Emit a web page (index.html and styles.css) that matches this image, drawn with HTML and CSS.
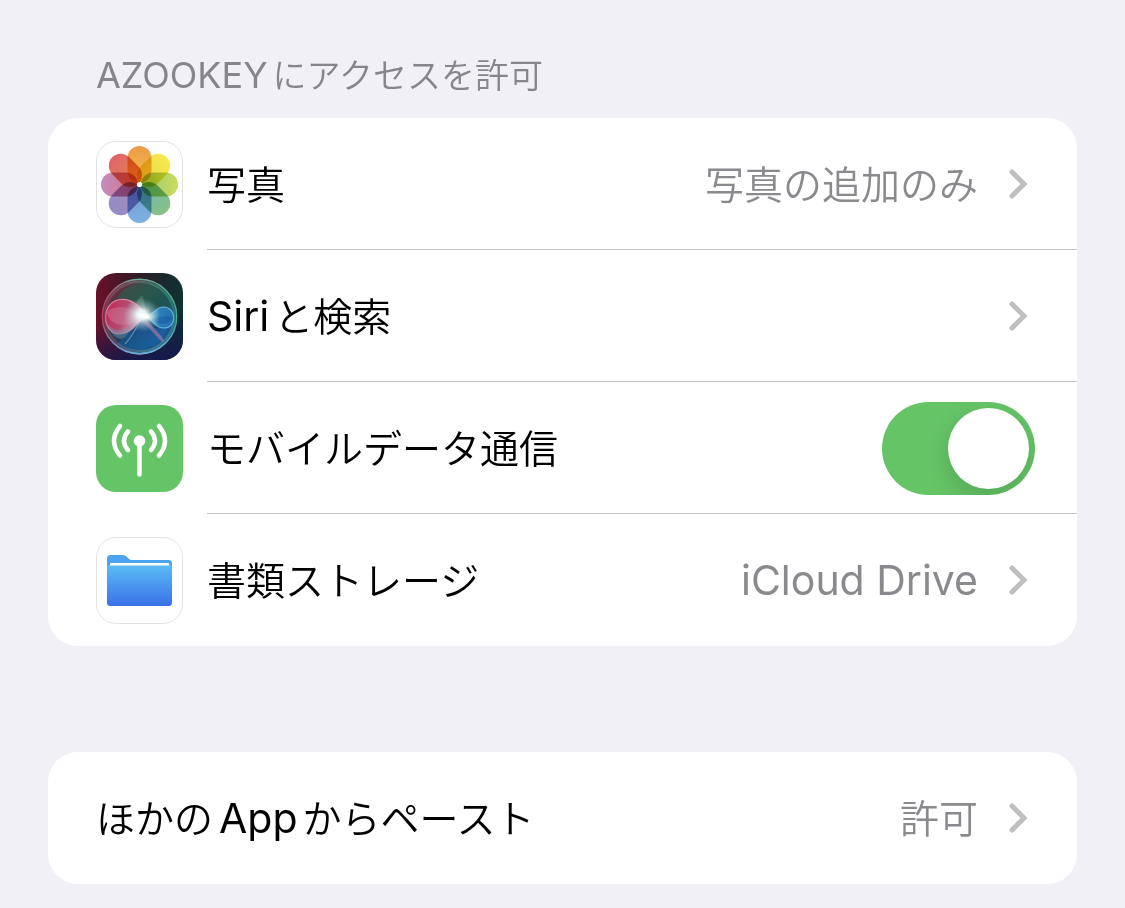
FILE: index.html
```html
<!DOCTYPE html>
<html lang="ja">
<head>
<meta charset="utf-8">
<meta name="viewport" content="width=device-width, initial-scale=1">
<title>azooKey</title>
<link rel="stylesheet" href="styles.css">
</head>
<body>
<main class="settings">
  <section class="group">
    <h2 class="group-title"><span class="latin space-after">AZOOKEY</span>にアクセスを許可</h2>
    <ul class="card">
      <li>
        <button class="row" type="button">
          <svg class="app-icon" viewBox="0 0 87 87" aria-hidden="true">
            <defs>
              <linearGradient id="p0" x1="0" y1="0" x2="0" y2="1"><stop offset="0" stop-color="#ec9a45"/><stop offset="1" stop-color="#f3c552"/></linearGradient>
              <linearGradient id="p1" x1="0" y1="0" x2="0" y2="1"><stop offset="0" stop-color="#f8e94f"/><stop offset="1" stop-color="#e6d84c"/></linearGradient>
              <linearGradient id="p2" x1="0" y1="0" x2="0" y2="1"><stop offset="0" stop-color="#c9dc5c"/><stop offset="1" stop-color="#9cc676"/></linearGradient>
              <linearGradient id="p3" x1="0" y1="0" x2="0" y2="1"><stop offset="0" stop-color="#88c184"/><stop offset="1" stop-color="#74b7b4"/></linearGradient>
              <linearGradient id="p4" x1="0" y1="0" x2="0" y2="1"><stop offset="0" stop-color="#7cb2e0"/><stop offset="1" stop-color="#7398d0"/></linearGradient>
              <linearGradient id="p5" x1="0" y1="0" x2="0" y2="1"><stop offset="0" stop-color="#948cc6"/><stop offset="1" stop-color="#a78abc"/></linearGradient>
              <linearGradient id="p6" x1="0" y1="0" x2="0" y2="1"><stop offset="0" stop-color="#c48cc0"/><stop offset="1" stop-color="#d8707c"/></linearGradient>
              <linearGradient id="p7" x1="0" y1="0" x2="0" y2="1"><stop offset="0" stop-color="#de6468"/><stop offset="1" stop-color="#e68850"/></linearGradient>
            </defs>
            <rect x=".5" y=".5" width="86" height="86" rx="19.5" fill="#fff" stroke="#e3e3e5"/>
            <g class="petals">
              <rect x="31.5" y="5" width="24" height="37" rx="12" fill="url(#p0)"/>
              <rect x="31.5" y="5" width="24" height="37" rx="12" fill="url(#p1)" transform="rotate(45 43.5 43.5)"/>
              <rect x="31.5" y="5" width="24" height="37" rx="12" fill="url(#p2)" transform="rotate(90 43.5 43.5)"/>
              <rect x="31.5" y="5" width="24" height="37" rx="12" fill="url(#p3)" transform="rotate(135 43.5 43.5)"/>
              <rect x="31.5" y="5" width="24" height="37" rx="12" fill="url(#p4)" transform="rotate(180 43.5 43.5)"/>
              <rect x="31.5" y="5" width="24" height="37" rx="12" fill="url(#p5)" transform="rotate(225 43.5 43.5)"/>
              <rect x="31.5" y="5" width="24" height="37" rx="12" fill="url(#p6)" transform="rotate(270 43.5 43.5)"/>
              <rect x="31.5" y="5" width="24" height="37" rx="12" fill="url(#p7)" transform="rotate(315 43.5 43.5)"/>
            </g>
            <circle cx="43.5" cy="43.5" r="2.6" fill="#fff"/>
          </svg>
          <span class="row-body">
            <span class="label">写真</span>
            <span class="value">写真の追加のみ</span>
            <svg class="chevron" viewBox="0 0 20 32" aria-hidden="true"><path d="M4 4 16 16 4 28"/></svg>
          </span>
        </button>
      </li>
      <li>
        <button class="row" type="button">
          <svg class="app-icon" viewBox="0 0 87 87" aria-hidden="true">
            <defs>
              <linearGradient id="sBg" x1="0" y1="0" x2="1" y2="0"><stop offset="0" stop-color="#6b1029"/><stop offset=".5" stop-color="#2c1e28"/><stop offset="1" stop-color="#0f3233"/></linearGradient>
              <linearGradient id="sLow" x1=".3" y1="0" x2=".5" y2="1"><stop offset=".5" stop-color="#141850" stop-opacity="0"/><stop offset="1" stop-color="#141850" stop-opacity=".85"/></linearGradient>
              <linearGradient id="sOrb" x1=".1" y1=".2" x2=".8" y2=".9"><stop offset="0" stop-color="#6b2c42"/><stop offset=".35" stop-color="#35424c"/><stop offset=".6" stop-color="#1d3c5c"/><stop offset="1" stop-color="#1c5c9a"/></linearGradient>
              <linearGradient id="sRim" x1="0" y1=".5" x2="1" y2=".4"><stop offset="0" stop-color="#b04462"/><stop offset=".45" stop-color="#79a596"/><stop offset="1" stop-color="#46ae8c"/></linearGradient>
              <linearGradient id="sRimLow" x1="0" y1="0" x2="0" y2="1"><stop offset=".55" stop-color="#5aa0d8" stop-opacity="0"/><stop offset="1" stop-color="#6aaee0"/></linearGradient>
              <linearGradient id="sRed" x1="0" y1="0" x2="1" y2=".3"><stop offset="0" stop-color="#d02458"/><stop offset=".55" stop-color="#c04c74"/><stop offset="1" stop-color="#f0c8d6"/></linearGradient>
              <linearGradient id="sBlue" x1="0" y1="0" x2="1" y2="0"><stop offset="0" stop-color="#c8ecf6"/><stop offset=".5" stop-color="#2f83c4"/><stop offset="1" stop-color="#2675b8"/></linearGradient>
              <radialGradient id="sGlow"><stop offset="0" stop-color="#fff"/><stop offset=".25" stop-color="#fff" stop-opacity=".95"/><stop offset=".5" stop-color="#dceef0" stop-opacity=".5"/><stop offset="1" stop-color="#8cc4cc" stop-opacity="0"/></radialGradient>
              <clipPath id="sClip"><rect width="87" height="87" rx="20"/></clipPath>
              <clipPath id="sCircle"><circle cx="43.5" cy="43.5" r="37"/></clipPath>
            </defs>
            <g clip-path="url(#sClip)">
              <rect width="87" height="87" fill="url(#sBg)"/>
              <rect width="87" height="87" fill="url(#sLow)"/>
              <circle cx="43.5" cy="43.5" r="37.5" fill="url(#sOrb)"/>
              <g clip-path="url(#sCircle)">
                <ellipse cx="49" cy="30" rx="28" ry="20" fill="#1f6a4c" opacity=".5"/>
                <path d="M46 43C38 36 38 29 46 22C49 29 50 36 49 43Z" fill="#8aa494" opacity=".35"/>
                <path d="M45 44C34 58 25 68 21 71C34 83 69 78 73 48C64 60 55 56 45 44Z" fill="#1a70bc" opacity=".4"/>
                <path d="M45 46C40 56 36 64 29 71" fill="none" stroke="#7fb4dc" stroke-width="1.2" opacity=".6"/>
                <path d="M50 46 66 64Q70 70 65 68L48 50Z" fill="#b77caa" opacity=".6"/>
                <path d="M49 41C41 29 33 26 25 26.5C4 28 5 61 24 61C38 60 40 48 49 44Z" fill="url(#sRed)" stroke="#f08aa6" stroke-width="1.2" opacity=".92"/>
                <path d="M46 42C33 31 12 33 11 40C14 54 33 55 45 45Z" fill="#d898ae" opacity=".35"/>
                <path d="M44 45C36 51 32 65 25 66C17 65 13 56 12 51C22 64 35 53 44 45Z" fill="#6a9ab8" opacity=".45"/>
                <path d="M49 43C58 42 59 34 68 34C81 35 81 55 68 55C58 55 57 46 49 44Z" fill="url(#sBlue)" stroke="#6cc4e4" stroke-width="1.2" opacity=".88"/>
                <path d="M54 44C60 47 68 41 77 44C73 53 61 53 54 44Z" fill="#154e9c" opacity=".4"/>
                <ellipse cx="46" cy="42" rx="19" ry="17" fill="url(#sGlow)"/>
                <ellipse cx="48" cy="43" rx="15" ry="6" fill="url(#sGlow)" transform="rotate(14 48 43)"/>
              </g>
              <circle cx="43.5" cy="43.5" r="37.2" fill="none" stroke="url(#sRim)" stroke-width="1.4"/>
              <circle cx="43.5" cy="43.5" r="34.8" fill="none" stroke="url(#sRim)" stroke-width="2.4" opacity=".4"/>
              <circle cx="43.5" cy="43.5" r="37.2" fill="none" stroke="url(#sRimLow)" stroke-width="1.4"/>
            </g>
          </svg>
          <span class="row-body">
            <span class="label"><span class="latin space-after">Siri</span>と検索</span>
            <svg class="chevron" viewBox="0 0 20 32" aria-hidden="true"><path d="M4 4 16 16 4 28"/></svg>
          </span>
        </button>
      </li>
      <li class="row">
        <svg class="app-icon" viewBox="0 0 87 87" aria-hidden="true">
          <rect width="87" height="87" rx="20" fill="#65c466"/>
          <circle cx="43.5" cy="36" r="5.8" fill="#fff"/>
          <path d="M43.5 38V69.5M32 26.5Q24 36 32 45M24 21Q12 36 24 50.5M55 26.5Q63 36 55 45M63 21Q75 36 63 50.5" fill="none" stroke="#fff" stroke-width="4.5" stroke-linecap="round"/>
        </svg>
        <span class="row-body">
          <label class="label" for="mobile-data">モバイルデータ通信</label>
          <input class="switch" id="mobile-data" type="checkbox" role="switch" checked>
        </span>
      </li>
      <li>
        <button class="row" type="button">
          <svg class="app-icon" viewBox="0 0 87 87" aria-hidden="true">
            <defs>
              <linearGradient id="fFront" x1="0" y1="0" x2="0" y2="1"><stop offset="0" stop-color="#5bbcf5"/><stop offset="1" stop-color="#3971e8"/></linearGradient>
            </defs>
            <rect x=".5" y=".5" width="86" height="86" rx="19.5" fill="#fff" stroke="#e3e3e5"/>
            <path d="M11 34V21.5Q11 18 14.5 18H27Q29 18 30.5 19.5L33 22Q34 23 36 23H72.5Q76 23 76 26.5V34Z" fill="#4ba5ee"/>
            <rect x="14" y="26" width="59" height="5" rx="1" fill="#fff"/>
            <path d="M11 28.5H76V65.5Q76 69 72.5 69H14.5Q11 69 11 65.5Z" fill="url(#fFront)"/>
          </svg>
          <span class="row-body">
            <span class="label">書類ストレージ</span>
            <span class="value"><span class="latin">iCloud Drive</span></span>
            <svg class="chevron" viewBox="0 0 20 32" aria-hidden="true"><path d="M4 4 16 16 4 28"/></svg>
          </span>
        </button>
      </li>
    </ul>
  </section>
  <section class="group">
    <ul class="card">
      <li>
        <button class="row" type="button">
          <span class="row-body">
            <span class="label">ほかの<span class="latin space-before space-after">App</span>からペースト</span>
            <span class="value">許可</span>
            <svg class="chevron" viewBox="0 0 20 32" aria-hidden="true"><path d="M4 4 16 16 4 28"/></svg>
          </span>
        </button>
      </li>
    </ul>
  </section>
</main>
</body>
</html>
```
FILE: styles.css
```css
* {
  box-sizing: border-box;
}

body {
  margin: 0;
  background: #f1f0f6;
  color: #000;
  font-family: "Noto Sans CJK JP", sans-serif;
  font-size: 39px;
  font-weight: 350;
  line-height: 48px;
}

.settings {
  display: flex;
  flex-direction: column;
  gap: 106px;
  padding: 50px 48px 24px;
}

.group-title {
  margin: 0 0 20px;
  padding: 0 48px;
  color: #868589;
  font-size: 34px;
  font-weight: 350;
}

.latin {
  font-family: Inter, sans-serif;
  font-size: 41px;
  font-weight: 400;
  line-height: 1;
}

.group-title .latin {
  font-size: 36px;
}

.space-before {
  margin-left: 6px;
}

.space-after {
  margin-right: 5px;
}

.card {
  margin: 0;
  padding: 0;
  list-style: none;
  overflow: hidden;
  border-radius: 30px;
  background: #fff;
}

.row {
  display: flex;
  align-items: center;
  gap: 24px;
  width: 100%;
  margin: 0;
  padding: 0 0 0 48px;
  border: 0;
  background: none;
  color: inherit;
  font: inherit;
  text-align: left;
}

.app-icon {
  flex: none;
  width: 87px;
  height: 87px;
}

.petals {
  isolation: isolate;
}

.petals rect {
  mix-blend-mode: multiply;
}

.row-body {
  display: flex;
  flex: 1;
  align-items: center;
  min-height: 132px;
  padding-right: 49px;
  box-shadow: inset 0 -1px #c6c6c8;
}

.card > li:last-child .row-body {
  box-shadow: none;
}

.label {
  flex: 1;
  padding-bottom: 4px;
}

.value {
  padding-bottom: 4px;
  color: #8a898e;
}

.chevron {
  flex: none;
  width: 20px;
  height: 32px;
  margin-left: 30px;
  fill: none;
  stroke: #bfbfc0;
  stroke-width: 5;
  stroke-linecap: round;
  stroke-linejoin: miter;
}

.switch {
  display: flex;
  align-items: center;
  appearance: none;
  width: 153px;
  height: 93px;
  margin: 0 -7px 0 0;
  padding: 6px;
  overflow: hidden;
  border-radius: 47px;
  background: #e9e9ea;
}

.switch::before {
  content: "";
  width: 81px;
  height: 81px;
  border-radius: 50%;
  background: #fff;
  box-shadow: 0 9px 24px rgb(0 0 0 / 15%);
}

.switch:checked {
  justify-content: flex-end;
  background: #65c466;
}
```
